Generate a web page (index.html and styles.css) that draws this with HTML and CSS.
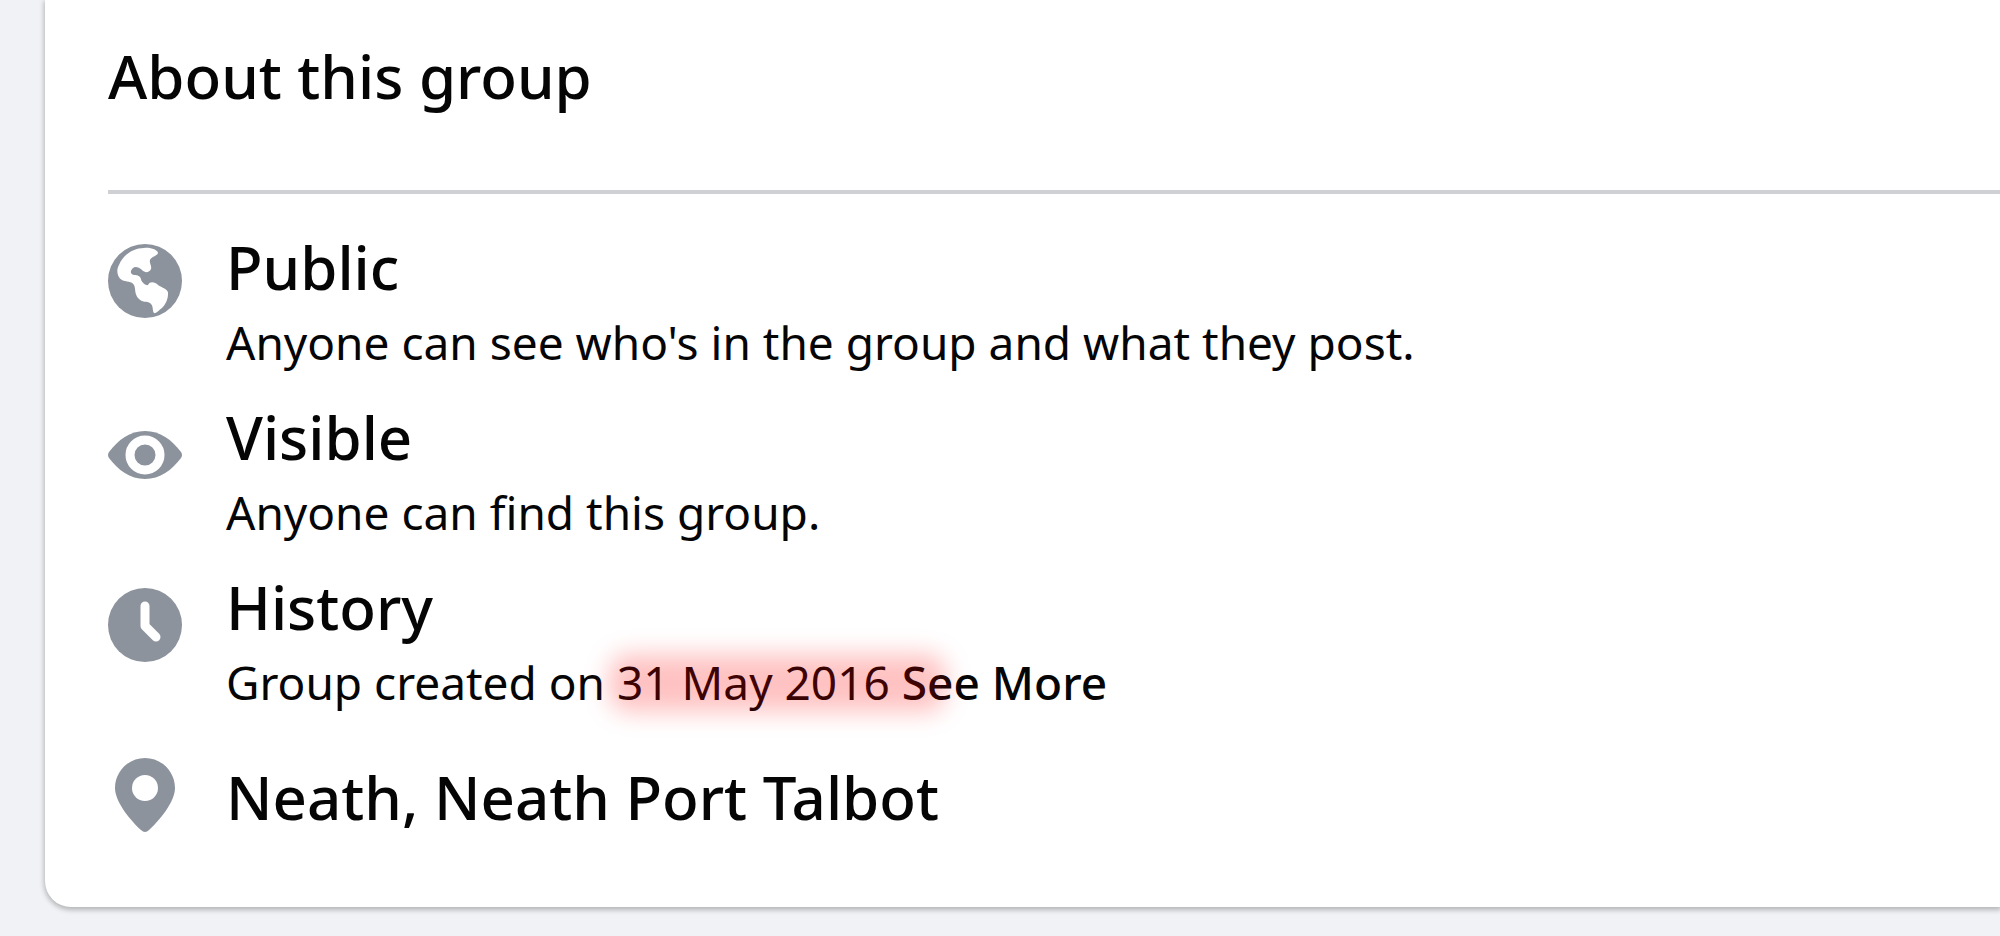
FILE: index.html
```html
<!DOCTYPE html>
<html lang="en">
<head>
    <meta charset="UTF-8">
    <meta name="viewport" content="width=device-width, initial-scale=1.0">
    <title>About this group</title>
    <link rel="stylesheet" href="styles.css">
</head>
<body>
    <main class="about-card">
        <h2>About this group</h2>

        <ul class="about-list">
            <li class="about-item public">
                <svg class="icon" viewBox="0 0 74 74" aria-hidden="true">
                    <circle cx="37" cy="37" r="37" fill="#8c939d"/>
                    <path d="M36 4C42 3 50 6 50 9C49 12 43 13 42 16C41 19 44 22 43 25C41 29 37 29 34 26C31 23 27 22 25 24C22 27 22 30 26 31C30 31 32 32 33 35C33 38 38 42 40 41C42 37 47 38 50 41C54 44 61 45 60 50C60 56 57 61 54 64C51 66 48 70 46 69C44 67 46 62 42 59C39 57 35 59 31 55C26 50 28 45 26 41C24 37 18 38 14 36C9 33 8 26 11 21C15 11 25 4 36 4Z" fill="#fff"/>
                </svg>
                <div class="about-text">
                    <h3>Public</h3>
                    <p>Anyone can see who's in the group and what they post.</p>
                </div>
            </li>
            <li class="about-item">
                <svg class="icon" viewBox="0 0 74 74" aria-hidden="true">
                    <path d="M1 34C10 22 22 13 37 13S64 22 73 34Q75 37 73 40C64 52 52 61 37 61S10 52 1 40Q-1 37 1 34Z" fill="#8c939d"/>
                    <circle cx="37" cy="37" r="15" fill="none" stroke="#fff" stroke-width="9"/>
                </svg>
                <div class="about-text">
                    <h3>Visible</h3>
                    <p>Anyone can find this group.</p>
                </div>
            </li>
            <li class="about-item">
                <svg class="icon" viewBox="0 0 74 74" aria-hidden="true">
                    <circle cx="37" cy="37" r="37" fill="#8c939d"/>
                    <path d="M37 18V38L48 49" fill="none" stroke="#fff" stroke-width="9" stroke-linecap="round" stroke-linejoin="round"/>
                </svg>
                <div class="about-text">
                    <h3>History</h3>
                    <p>Group created on <span class="created-date">31 May 2016</span> <button type="button" class="see-more">See More</button></p>
                </div>
            </li>
            <li class="about-item location">
                <svg class="icon" viewBox="0 0 74 74" aria-hidden="true">
                    <path d="M37 0C53 0 67 13 67 30C67 44 51 63 41 72Q37 76 33 72C23 63 7 44 7 30C7 13 21 0 37 0Z" fill="#8c939d"/>
                    <circle cx="37" cy="30" r="13" fill="#fff"/>
                </svg>
                <div class="about-text">
                    <h3>Neath, Neath Port Talbot</h3>
                </div>
            </li>
        </ul>
    </main>
</body>
</html>
```

FILE: styles.css
```css
body {
    margin: 0;
    background: #f0f2f5;
    color: #050505;
    font-family: "Noto Sans", "Open Sans", sans-serif;
    overflow-x: hidden;
}
.about-card {
    margin: 0 0 24px 45px;
    padding: 36px 0 70px 63px;
    background: #fff;
    border-radius: 0 0 0 26px;
    box-shadow: 0 2px 5px 1px rgba(0, 0, 0, 0.25);
}
h2, h3, p {
    margin: 0;
}
h2, h3 {
    font-size: 60px;
    font-weight: 500;
    line-height: 80px;
}
h2 {
    padding-bottom: 74px;
    border-bottom: 4px solid #ced0d4;
}
.about-list {
    display: flex;
    flex-direction: column;
    gap: 20px;
    margin: 0;
    padding: 33px 0 0;
    list-style: none;
}
.about-item {
    display: flex;
    align-items: flex-start;
    gap: 44px;
}
.icon {
    flex: none;
    width: 74px;
    height: 74px;
    margin-top: 21px;
}
.public .icon {
    margin-top: 17px;
}
p {
    font-size: 46px;
    line-height: 70px;
}
.created-date {
    position: relative;
}
/* soft red marker over the date */
.created-date::after {
    content: "";
    position: absolute;
    inset: 3px -56px 1px -8px;
    border-radius: 20px;
    background: rgba(255, 0, 0, 0.24);
    filter: blur(12px);
    pointer-events: none;
}
.see-more {
    padding: 0;
    border: none;
    background: none;
    color: inherit;
    font: inherit;
    font-weight: 500;
    cursor: pointer;
}
.location .about-text {
    padding-top: 20px;
}
```
